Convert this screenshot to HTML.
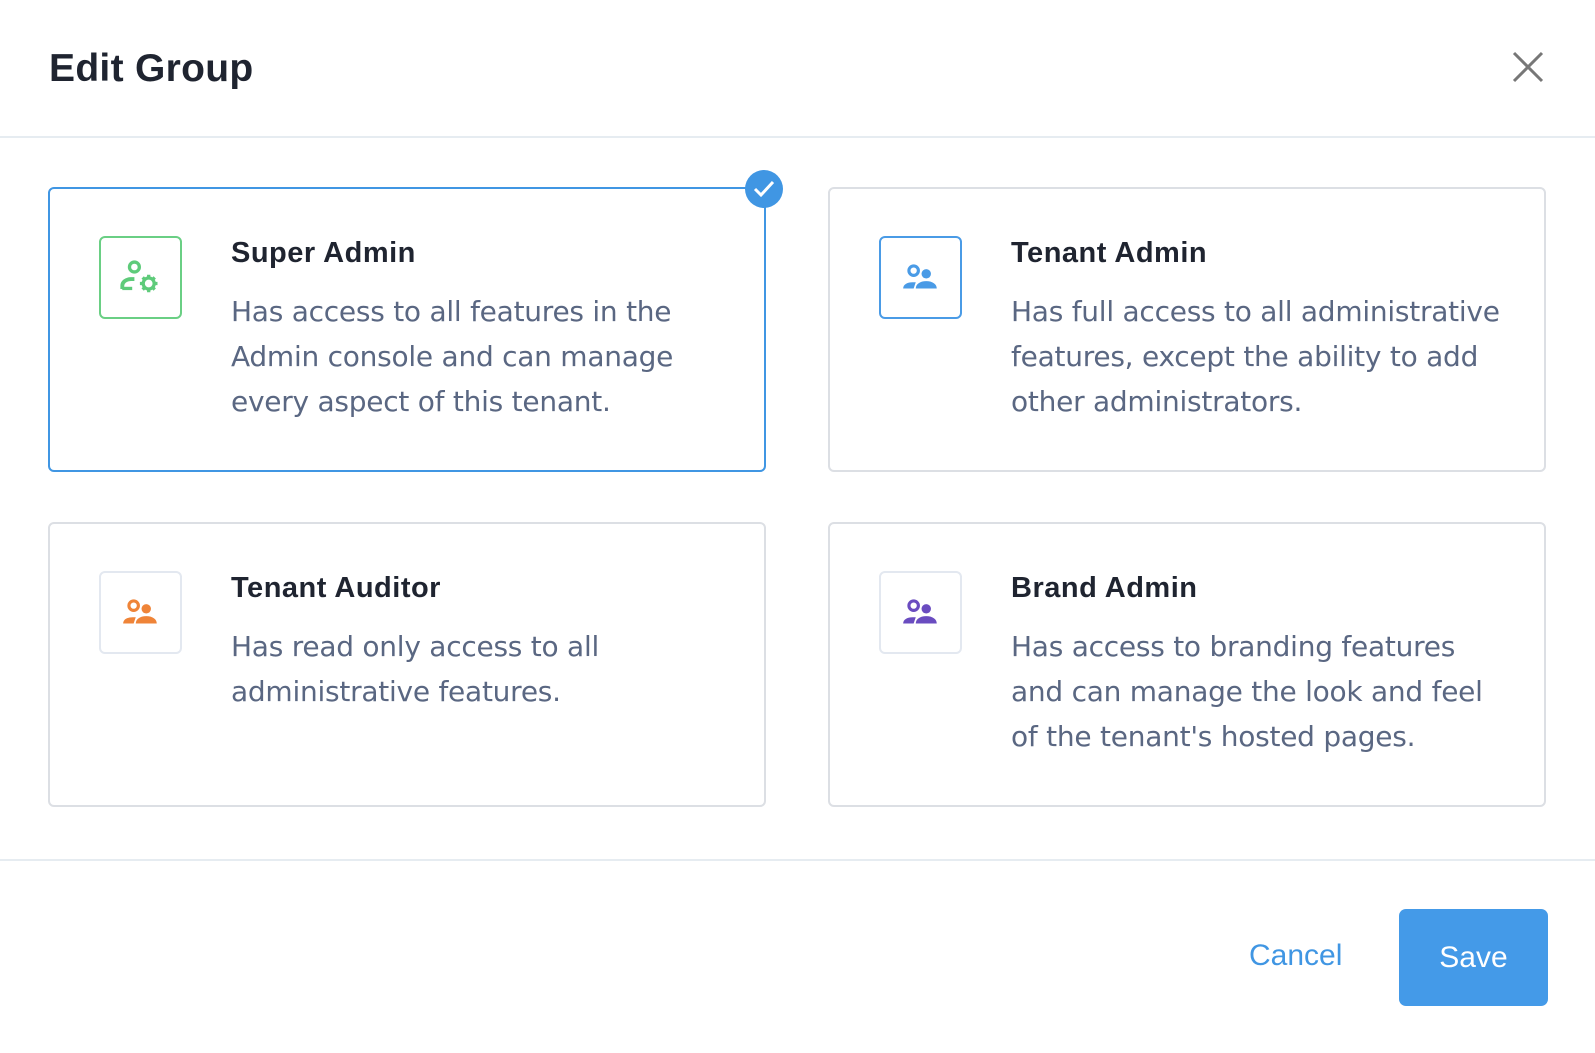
<!DOCTYPE html>
<html><head><meta charset="utf-8"><style>
*{margin:0;padding:0;box-sizing:border-box}
html,body{width:1595px;height:1053px;overflow:hidden;background:#fff;font-family:"Liberation Sans",sans-serif}
.title{position:absolute;left:49px;top:47px;font-size:39px;color:#1f2430;font-weight:bold;letter-spacing:0.3px}
.close{position:absolute;left:1511px;top:50px}
.hd{position:absolute;left:0;top:136px;width:1595px;height:2px;background:#e6ecf1}
.fd{position:absolute;left:0;top:859px;width:1595px;height:2px;background:#e6ecf1}
.card{position:absolute;width:718px;height:285px;border:2px solid #dcdfe4;border-radius:6px}
.card.sel{border-color:#4096e3}
.ib{position:absolute;left:49px;top:47px;width:83px;height:83px;border:2px solid #e3e8f0;border-radius:6px;display:flex;align-items:center;justify-content:center}
.ct{position:absolute;left:181px;top:48px;font-size:29px;color:#1f2430;font-weight:bold;letter-spacing:0.5px}
.cd{position:absolute;left:181px;top:100px;white-space:nowrap;font-family:"DejaVu Sans",sans-serif;font-size:28px;letter-spacing:-0.25px;line-height:45px;color:#5a6782}
.chk{position:absolute;left:745px;top:170px;width:38px;height:38px;border-radius:50%;background:#4096e3;display:flex;align-items:center;justify-content:center}
.cancel{position:absolute;left:1249px;top:939px;font-size:30px;color:#4096e3}
.save{position:absolute;left:1399px;top:909px;width:149px;height:97px;border-radius:7px;background:#449ae8;color:#fff;font-size:30px;display:flex;align-items:center;justify-content:center}
</style></head><body>
<div class="title">Edit Group</div>
<svg class="close" width="34" height="34" viewBox="0 0 34 34"><path d="M3 3L31 31M31 3L3 31" stroke="#777" stroke-width="3"/></svg>
<div class="hd"></div>

<div class="card sel" style="left:48px;top:187px">
 <div class="ib" style="border-color:#6acf84"><svg width="44" height="38" viewBox="0 0 40 34"><circle cx="14" cy="7" r="4.5" fill="none" stroke="#5ecb7a" stroke-width="3"/><path d="M3 27v-3c0-3 3-6 8-6h3" fill="none" stroke="#5ecb7a" stroke-width="3.5"/><path d="M3 25h9v3H3z" fill="#5ecb7a"/><circle cx="27" cy="22" r="5" fill="none" stroke="#5ecb7a" stroke-width="3"/><path d="M27 14v4M27 26v4M19 22h4M31 22h4M21.5 16.5l2.5 2.5M30 25l2.5 2.5M21.5 27.5l2.5-2.5M30 19l2.5-2.5" stroke="#5ecb7a" stroke-width="3"/></svg></div>
 <div class="ct">Super Admin</div>
 <div class="cd">Has access to all features in the<br>Admin console and can manage<br>every aspect of this tenant.</div>
</div>
<div class="chk"><svg width="22" height="18" viewBox="0 0 22 18"><path d="M2 9l6 6L20 2" fill="none" stroke="#fff" stroke-width="3"/></svg></div>

<div class="card" style="left:828px;top:187px">
 <div class="ib" style="border-color:#4a9be6"><svg width="42" height="30" viewBox="0 0 40 28"><circle cx="13" cy="7" r="4.5" fill="none" stroke="#4a9be6" stroke-width="3"/><circle cx="25" cy="10" r="4.5" fill="#4a9be6"/><path d="M3 24c0-4 4-6 9-6h3l-2 6z" fill="#4a9be6"/><path d="M15 24c0-4 4-7 10-7s10 3 10 7z" fill="#4a9be6"/></svg></div>
 <div class="ct">Tenant Admin</div>
 <div class="cd">Has full access to all administrative<br>features, except the ability to add<br>other administrators.</div>
</div>

<div class="card" style="left:48px;top:522px">
 <div class="ib"><svg width="42" height="30" viewBox="0 0 40 28"><circle cx="13" cy="7" r="4.5" fill="none" stroke="#ef8438" stroke-width="3"/><circle cx="25" cy="10" r="4.5" fill="#ef8438"/><path d="M3 24c0-4 4-6 9-6h3l-2 6z" fill="#ef8438"/><path d="M15 24c0-4 4-7 10-7s10 3 10 7z" fill="#ef8438"/></svg></div>
 <div class="ct">Tenant Auditor</div>
 <div class="cd">Has read only access to all<br>administrative features.</div>
</div>

<div class="card" style="left:828px;top:522px">
 <div class="ib"><svg width="42" height="30" viewBox="0 0 40 28"><circle cx="13" cy="7" r="4.5" fill="none" stroke="#6a4cc0" stroke-width="3"/><circle cx="25" cy="10" r="4.5" fill="#6a4cc0"/><path d="M3 24c0-4 4-6 9-6h3l-2 6z" fill="#6a4cc0"/><path d="M15 24c0-4 4-7 10-7s10 3 10 7z" fill="#6a4cc0"/></svg></div>
 <div class="ct">Brand Admin</div>
 <div class="cd">Has access to branding features<br>and can manage the look and feel<br>of the tenant's hosted pages.</div>
</div>

<div class="fd"></div>
<div class="cancel">Cancel</div>
<div class="save">Save</div>
</body></html>
